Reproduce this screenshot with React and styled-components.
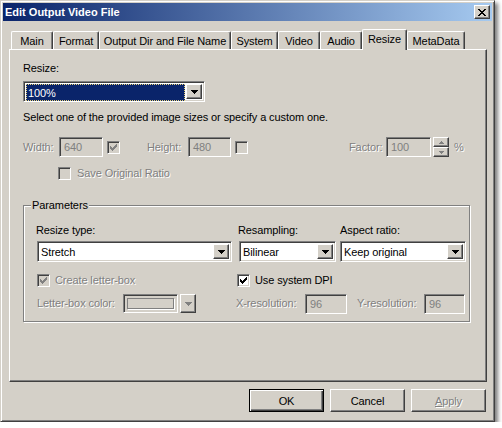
import React from "react";
import styled, { createGlobalStyle, css } from "styled-components";

const GlobalStyle = createGlobalStyle`
  html, body { margin: 0; padding: 0; background: #fff; }
  body {
    font-family: "Liberation Sans", Arial, sans-serif;
    font-size: 11px;
    letter-spacing: -0.1px;
    color: #000;
  }
`;

const FACE = "#d4d0c8";

const raised = css`
  border: 1px solid;
  border-color: #fff #404040 #404040 #fff;
  box-shadow: inset -1px -1px #808080;
  background: ${FACE};
`;

const sunken = css`
  border: 1px solid;
  border-color: #808080 #fff #fff #808080;
  box-shadow: inset 1px 1px #404040, inset -1px -1px ${FACE};
`;

const Window = styled.div`
  width: 495px;
  height: 422px;
  box-sizing: border-box;
  background: ${FACE};
  border: 1px solid;
  border-color: ${FACE} #404040 #404040 ${FACE};
  box-shadow: inset 1px 1px #fff, inset -1px -1px #808080, 3px 3px 4px rgba(0, 0, 0, 0.5);
  padding: 2px;
  display: flex;
  flex-direction: column;
`;

const TitleBar = styled.div`
  height: 18px;
  display: flex;
  align-items: center;
  padding: 0 2px;
  background: linear-gradient(to right, #0a246a, #a6caf0);
  color: #fff;
  font-weight: bold;
  letter-spacing: 0;
`;

const CloseBtn = styled.div`
  ${raised};
  width: 16px;
  height: 14px;
  box-sizing: border-box;
  margin-left: auto;
  display: flex;
  align-items: center;
  justify-content: center;
`;

const Content = styled.div`
  padding: 8px 0 0 6px;
`;

const TabStrip = styled.div`
  display: flex;
  align-items: flex-end;
  height: 20px;
  padding-left: 2px;
`;

const Tab = styled.div`
  width: ${(p) => p.$w}px;
  height: ${(p) => (p.$active ? 21 : 18)}px;
  box-sizing: border-box;
  border-top: 1px solid #fff;
  border-left: 1px solid #fff;
  border-right: 1px solid #404040;
  box-shadow: inset -1px 0 #808080;
  border-radius: 2px 2px 0 0;
  background: ${FACE};
  display: flex;
  align-items: center;
  justify-content: center;
  white-space: nowrap;
  ${(p) =>
    p.$active &&
    css`
      position: relative;
      z-index: 1;
      margin-bottom: -1px;
      padding-bottom: 3px;
    `}
`;

const Panel = styled.div`
  width: 478px;
  height: 333px;
  box-sizing: border-box;
  border: 1px solid;
  border-color: #fff #404040 #404040 #fff;
  box-shadow: inset -1px -1px #808080;
  padding: 12px 13px 0 13px;
`;

const Caption = styled.div`
  flex-shrink: 0;
  line-height: 13px;
  white-space: nowrap;
  width: ${(p) => (p.$w ? `${p.$w}px` : "auto")};
  margin-left: ${(p) => p.$ml || 0}px;
  color: ${(p) => (p.$disabled ? "#808080" : "#000")};
  text-shadow: ${(p) => (p.$disabled ? "1px 1px 0 #fff" : "none")};
`;

const Combo = styled.div`
  ${sunken};
  width: ${(p) => p.$w}px;
  height: 21px;
  box-sizing: border-box;
  background: #fff;
  display: flex;
  align-items: stretch;
  padding: 2px;
`;

const ComboText = styled.div`
  flex: 1;
  display: flex;
  align-items: center;
  padding-left: 1px;
  white-space: nowrap;
  overflow: hidden;
`;

const Highlight = styled.div`
  flex: 1;
  height: 15px;
  margin-right: 1px;
  background: #0a246a;
  color: #fff;
  border: 1px dotted #e8d27a;
  display: flex;
  align-items: center;
  padding-left: 1px;
`;

const DropBtn = styled.div`
  ${raised};
  width: 16px;
  box-sizing: border-box;
  display: flex;
  align-items: center;
  justify-content: center;
  flex-shrink: 0;
`;

const ResizeCombo = styled(Combo)`
  margin-top: 6px;
`;

const Hint = styled.div`
  margin-top: 9px;
  line-height: 13px;
`;

const SizeRow = styled.div`
  display: flex;
  align-items: center;
  height: 20px;
  margin-top: 13px;
`;

const Field = styled.div`
  ${sunken};
  width: ${(p) => p.$w}px;
  height: 20px;
  box-sizing: border-box;
  flex-shrink: 0;
  background: ${FACE};
  color: #808080;
  display: flex;
  align-items: center;
  padding-left: 4px;
`;

const Check = styled.div`
  ${sunken};
  width: 13px;
  height: 13px;
  box-sizing: border-box;
  flex-shrink: 0;
  margin-left: ${(p) => p.$ml || 0}px;
  background: ${(p) => (p.$disabled ? FACE : "#fff")};
  display: flex;
  align-items: center;
  justify-content: center;
`;

const Spinner = styled.div`
  width: 16px;
  height: 20px;
  margin-left: 2px;
  display: flex;
  flex-direction: column;
  flex-shrink: 0;
`;

const SpinBtn = styled.div`
  ${raised};
  flex: 1;
  box-sizing: border-box;
  display: flex;
  align-items: center;
  justify-content: center;
`;

const RatioRow = styled.div`
  display: flex;
  align-items: center;
  gap: 6px;
  margin-top: 10px;
  padding-left: 35px;
`;

const Group = styled.fieldset`
  width: 447px;
  box-sizing: border-box;
  margin: 19px 0 0 0;
  padding: 0;
  border: 1px solid #808080;
  box-shadow: inset 1px 1px #fff, 1px 1px 0 #fff;
  min-inline-size: 0;
`;

const GroupTitle = styled.legend`
  margin-left: 7px;
  padding: 0 1px;
  line-height: 13px;
  background: ${FACE};
`;

const ParamGrid = styled.div`
  display: grid;
  grid-template-columns: 202px 101px 126px;
  grid-template-rows: 17px 33px 19px 21px;
  align-items: start;
  padding: 12px 0 7px 13px;
`;

const Wide = styled.div`
  grid-column: span 2;
  display: flex;
  align-items: center;
  height: ${(p) => p.$h || 13}px;
`;

const CheckLine = styled.div`
  display: flex;
  align-items: center;
  gap: 5px;
  height: 13px;
`;

const ColorRow = styled.div`
  display: flex;
  align-items: center;
  height: 21px;
`;

const ColorWell = styled.div`
  ${sunken};
  width: 55px;
  height: 19px;
  box-sizing: border-box;
  background: ${FACE};
  padding: 3px;
  display: flex;
`;

const Swatch = styled.div`
  flex: 1;
  border: 1px solid #808080;
  box-shadow: 1px 1px 0 #fff;
`;

const ColorDrop = styled(DropBtn)`
  height: 19px;
  margin-left: 2px;
`;

const ButtonRow = styled.div`
  width: 478px;
  display: flex;
  justify-content: flex-end;
  gap: 6px;
  margin-top: 7px;
  padding-right: 1px;
  box-sizing: border-box;
`;

const Button = styled.div`
  width: 75px;
  height: 23px;
  box-sizing: border-box;
  display: flex;
  align-items: center;
  justify-content: center;
  background: ${FACE};
  border: 1px solid;
  ${(p) =>
    p.$default
      ? css`
          border-color: #000;
          box-shadow: inset 1px 1px #fff, inset -1px -1px #404040, inset -2px -2px #808080;
        `
      : css`
          border-color: #fff #404040 #404040 #fff;
          box-shadow: inset -1px -1px #808080;
        `}
  color: ${(p) => (p.$disabled ? "#808080" : "#000")};
  text-shadow: ${(p) => (p.$disabled ? "1px 1px 0 #fff" : "none")};
`;

const Arrow = ({ color = "#000" }) => (
  <svg width="7" height="4" viewBox="0 0 7 4" shapeRendering="crispEdges">
    <path d="M0 0h7v1H0z M1 1h5v1H1z M2 2h3v1H2z M3 3h1v1H3z" fill={color} />
  </svg>
);

const SpinArrow = ({ up }) => (
  <svg width="5" height="3" viewBox="0 0 5 3" shapeRendering="crispEdges">
    <path
      d={up ? "M0 2h5v1H0z M1 1h3v1H1z M2 0h1v1H2z" : "M0 0h5v1H0z M1 1h3v1H1z M2 2h1v1H2z"}
      fill="#808080"
    />
  </svg>
);

const Tick = ({ color = "#000" }) => (
  <svg width="9" height="9" viewBox="0 0 9 9" shapeRendering="crispEdges">
    <path
      d="M7 1h1v1H7z M6 2h2v1H6z M1 3h1v1H1z M5 3h3v1H5z M1 4h2v1H1z M4 4h3v1H4z M1 5h5v1H1z M2 6h3v1H2z M3 7h1v1H3z"
      fill={color}
    />
  </svg>
);

const CloseGlyph = () => (
  <svg width="8" height="7" viewBox="0 0 8 7" shapeRendering="crispEdges">
    <path
      d="M0 0h2v1H0z M6 0h2v1H6z M1 1h2v1H1z M5 1h2v1H5z M2 2h4v1H2z M3 3h2v1H3z M2 4h4v1H2z M1 5h2v1H1z M5 5h2v1H5z M0 6h2v1H0z M6 6h2v1H6z"
      fill="#000"
    />
  </svg>
);

const tabs = [
  ["Main", 42],
  ["Format", 46],
  ["Output Dir and File Name", 132],
  ["System", 47],
  ["Video", 42],
  ["Audio", 42],
  ["Resize", 45],
  ["MetaData", 58],
];

export default function App() {
  return (
    <>
      <GlobalStyle />
      <Window>
        <TitleBar>
          Edit Output Video File
          <CloseBtn>
            <CloseGlyph />
          </CloseBtn>
        </TitleBar>

        <Content>
          <TabStrip>
            {tabs.map(([name, w]) => (
              <Tab key={name} $w={w} $active={name === "Resize"}>
                {name}
              </Tab>
            ))}
          </TabStrip>

          <Panel>
            <Caption>Resize:</Caption>
            <ResizeCombo $w={182}>
              <Highlight>100%</Highlight>
              <DropBtn>
                <Arrow />
              </DropBtn>
            </ResizeCombo>

            <Hint>Select one of the provided image sizes or specify a custom one.</Hint>

            <SizeRow>
              <Caption $disabled $w={36}>Width:</Caption>
              <Field $w={44}>640</Field>
              <Check $disabled $ml={4}>
                <Tick color="#808080" />
              </Check>
              <Caption $disabled $w={41} $ml={27}>Height:</Caption>
              <Field $w={43}>480</Field>
              <Check $disabled $ml={4} />
              <Caption $disabled $w={37} $ml={101}>Factor:</Caption>
              <Field $w={45}>100</Field>
              <Spinner>
                <SpinBtn>
                  <SpinArrow up />
                </SpinBtn>
                <SpinBtn>
                  <SpinArrow />
                </SpinBtn>
              </Spinner>
              <Caption $disabled $ml={5}>%</Caption>
            </SizeRow>

            <RatioRow>
              <Check $disabled />
              <Caption $disabled>Save Original Ratio</Caption>
            </RatioRow>

            <Group>
              <GroupTitle>Parameters</GroupTitle>
              <ParamGrid>
                <Caption $ml={-1}>Resize type:</Caption>
                <Caption $ml={-1}>Resampling:</Caption>
                <Caption>Aspect ratio:</Caption>

                <Combo $w={195}>
                  <ComboText>Stretch</ComboText>
                  <DropBtn>
                    <Arrow />
                  </DropBtn>
                </Combo>
                <Combo $w={97}>
                  <ComboText>Bilinear</ComboText>
                  <DropBtn>
                    <Arrow />
                  </DropBtn>
                </Combo>
                <Combo $w={126}>
                  <ComboText>Keep original</ComboText>
                  <DropBtn>
                    <Arrow />
                  </DropBtn>
                </Combo>

                <CheckLine>
                  <Check $disabled>
                    <Tick color="#808080" />
                  </Check>
                  <Caption $disabled>Create letter-box</Caption>
                </CheckLine>
                <Wide>
                  <CheckLine>
                    <Check $ml={-2}>
                      <Tick />
                    </Check>
                    <Caption>Use system DPI</Caption>
                  </CheckLine>
                </Wide>

                <ColorRow>
                  <Caption $disabled $w={86}>Letter-box color:</Caption>
                  <ColorWell>
                    <Swatch />
                  </ColorWell>
                  <ColorDrop>
                    <Arrow color="#808080" />
                  </ColorDrop>
                </ColorRow>
                <Wide $h={21}>
                  <Caption $disabled $w={69} $ml={-3}>X-resolution:</Caption>
                  <Field $w={42}>96</Field>
                  <Caption $disabled $w={67} $ml={10}>Y-resolution:</Caption>
                  <Field $w={41}>96</Field>
                </Wide>
              </ParamGrid>
            </Group>
          </Panel>

          <ButtonRow>
            <Button $default>OK</Button>
            <Button>Cancel</Button>
            <Button $disabled>
              <span>
                <u>A</u>pply
              </span>
            </Button>
          </ButtonRow>
        </Content>
      </Window>
    </>
  );
}
